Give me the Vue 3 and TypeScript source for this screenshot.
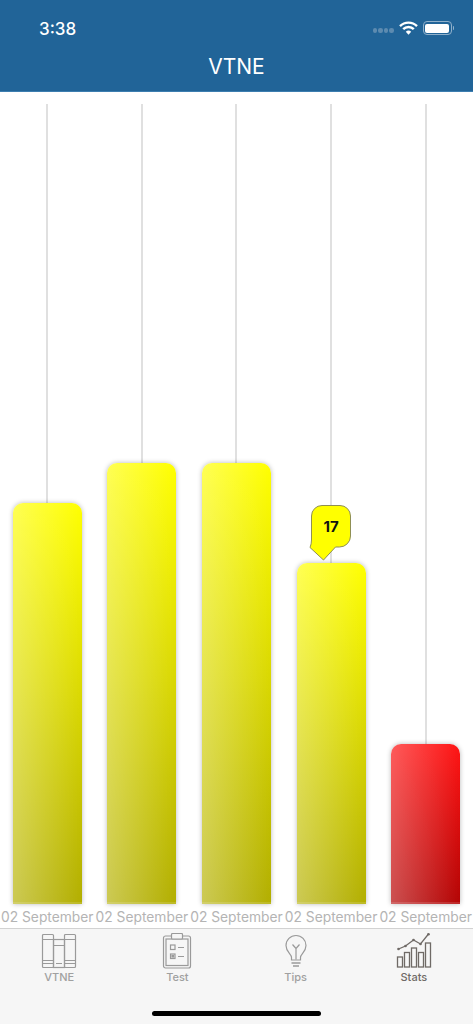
<script setup lang="ts">
interface Bar { height: number; kind: 'yellow' | 'red'; tip?: string }
const bars: Bar[] = [
  { height: 401, kind: 'yellow' },
  { height: 441, kind: 'yellow' },
  { height: 441, kind: 'yellow' },
  { height: 341, kind: 'yellow', tip: '17' },
  { height: 160, kind: 'red' },
]
const active = 'Stats'
const tabs = ['VTNE', 'Test', 'Tips', 'Stats']
</script>

<template>
  <div class="screen">
    <header class="header">
      <div class="status">
        <span class="time">3:38</span>
        <div class="status-icons">
          <span class="dots"><i></i><i></i><i></i><i></i></span>
          <svg class="wifi" width="19" height="14" viewBox="0 0 19 14">
            <path d="M1 5.2 A12 12 0 0 1 18 5.2" fill="none" stroke="#fff" stroke-width="2.4" />
            <path d="M4.2 8.2 A7.5 7.5 0 0 1 14.8 8.2" fill="none" stroke="#fff" stroke-width="2.4" />
            <path d="M6.8 10.8 A3.8 3.8 0 0 1 12.2 10.8 L9.5 13.8 Z" fill="#fff" />
          </svg>
          <span class="battery"><span class="fill"></span></span>
          <span class="nub"></span>
        </div>
      </div>
      <h1 class="title">VTNE</h1>
    </header>

    <main class="chart">
      <div class="cols">
        <div v-for="(b, i) in bars" :key="i" class="col">
          <div class="line"></div>
          <div class="bar" :class="b.kind" :style="{ height: b.height + 'px' }">
            <div v-if="b.tip" class="tip">
              <svg class="tip-shape" width="44" height="58" viewBox="0 0 44 58">
                <path
                  d="M13 1.5 H31 A10.5 10.5 0 0 1 41.5 12 V32 A11 11 0 0 1 30.5 43 H26.5 L14.5 56 L1 43.5 Q2.5 40 2.5 36 V12 A10.5 10.5 0 0 1 13 1.5 Z"
                  fill="#ffff00" stroke="#8f8f55" stroke-width="1"
                />
              </svg>
              <span class="tip-text">{{ b.tip }}</span>
            </div>
          </div>
        </div>
      </div>
      <div class="labels">
        <span v-for="(b, i) in bars" :key="i" class="label">02 September</span>
      </div>
    </main>

    <nav class="tabbar">
      <div class="tabs">
        <div v-for="t in tabs" :key="t" class="tab" :class="{ on: t === active }">
          <svg v-if="t === 'VTNE'" width="36" height="36" viewBox="0 0 36 36" fill="none" stroke="#9a9a9a" stroke-width="1.2">
            <rect x="1.5" y="1.5" width="11" height="33" rx="1" />
            <rect x="12.5" y="6.5" width="11" height="28" />
            <rect x="23.5" y="1.5" width="11" height="33" rx="1" />
            <path d="M1.5 6.5H12.5M12.5 12.5H23.5M23.5 6.5H34.5M1.5 27.5H12.5M1.5 30.5H12.5M15 30.5H21M23.5 27.5H34.5M23.5 30.5H34.5" />
          </svg>
          <svg v-else-if="t === 'Test'" width="36" height="36" viewBox="0 0 36 36" fill="none" stroke="#9a9a9a" stroke-width="1.2">
            <rect x="4.5" y="3" width="27" height="32" rx="2" />
            <rect x="7" y="6" width="22" height="26.5" />
            <rect x="12.5" y="0.5" width="11" height="5.5" rx="1" fill="#f6f6f6" />
            <rect x="11.5" y="12" width="4.5" height="4.5" />
            <rect x="11.5" y="21" width="4.5" height="4.5" />
            <rect x="13" y="22.5" width="1.5" height="1.5" fill="#9a9a9a" />
            <path d="M19 14.5H25M19 23.5H25" />
          </svg>
          <svg v-else-if="t === 'Tips'" width="36" height="36" viewBox="0 0 36 36" fill="none" stroke="#9a9a9a" stroke-width="1.2">
            <path d="M13.5 27 V24.5 C13.5 21 8 19 8 12.5 A10 10 0 0 1 28 12.5 C28 19 22.5 21 22.5 24.5 V27 Z" />
            <path d="M18 26.5V15.5M14.5 11.5L18 15.5L21.5 11.5" />
            <path d="M13.5 30H22.5M15 33H21" stroke-width="1.6" />
          </svg>
          <svg v-else width="36" height="36" viewBox="0 0 36 36" fill="none" stroke="#6f6a66" stroke-width="1.3">
            <rect x="1.5" y="24" width="5" height="10" />
            <rect x="8.5" y="19.5" width="5" height="14.5" />
            <rect x="15.5" y="15" width="5" height="19" />
            <rect x="22.5" y="19.5" width="5" height="14.5" />
            <rect x="29.5" y="10" width="5" height="24" />
            <path d="M2.5 16L9.5 13L17.5 7L24.5 11L32.5 1" />
            <g fill="#6f6a66" stroke="none">
              <circle cx="2.5" cy="16" r="1.3" />
              <circle cx="9.5" cy="13" r="1.3" />
              <circle cx="17.5" cy="7" r="1.3" />
              <circle cx="24.5" cy="11" r="1.3" />
              <circle cx="32.5" cy="1.3" r="1.3" />
            </g>
          </svg>
          <span class="tab-label">{{ t }}</span>
        </div>
      </div>
      <div class="home"></div>
    </nav>
  </div>
</template>

<style>
html, body { margin: 0; padding: 0; background: #fff; }
</style>

<style scoped>
.screen {
  width: 473px;
  height: 1024px;
  display: flex;
  flex-direction: column;
  overflow: hidden;
  font-family: Inter, "Liberation Sans", sans-serif;
  background: #fff;
}
.header {
  height: 92px;
  box-sizing: border-box;
  background: #216498;
  border-bottom: 1px solid #3d7eb0;
  color: #fff;
  display: flex;
  flex-direction: column;
}
.status {
  height: 53px;
  padding: 18px 19px 0 39px;
  box-sizing: border-box;
  display: flex;
  justify-content: space-between;
  align-items: flex-start;
}
.time { font-size: 17px; font-weight: 500; line-height: 22px; }
.status-icons { display: flex; align-items: center; height: 22px; margin-top: -1px; }
.dots { display: flex; gap: 1px; margin-right: 5px; margin-top: 5px; }
.dots i { width: 4.5px; height: 4.5px; border-radius: 50%; background: #5d8bb0; display: block; }
.wifi { margin-right: 5px; }
.battery {
  width: 29px;
  height: 14px;
  border: 1px solid #8fb0cb;
  border-radius: 4px;
  padding: 1.5px;
  box-sizing: border-box;
  display: flex;
}
.fill { flex: 1; background: #fff; border-radius: 2px; }
.nub { width: 1.5px; height: 4px; background: #8fb0cb; margin-left: 1px; border-radius: 0 1px 1px 0; }
.title {
  margin: 0;
  text-align: center;
  font-size: 21px;
  font-weight: 400;
  line-height: 28px;
}
.chart { flex: 1; display: flex; flex-direction: column; padding-top: 12px; min-height: 0; }
.cols { height: 800px; display: flex; }
.col { flex: 1; display: flex; flex-direction: column; align-items: center; }
.line { flex: 1; width: 2px; background: #e0e0e0; }
.bar {
  width: 69px;
  border-radius: 10px 10px 0 0;
  position: relative;
  box-shadow: 0 0 5px rgba(0, 0, 0, 0.28), inset 0 -2px 0 rgba(255, 255, 255, 0.14);
}
.yellow {
  background:
    linear-gradient(to right, rgba(255, 255, 255, 0.33), rgba(255, 255, 255, 0)),
    linear-gradient(to bottom, #ffff00, #b2ae00);
}
.red {
  background:
    linear-gradient(to right, rgba(255, 255, 255, 0.3), rgba(255, 255, 255, 0)),
    linear-gradient(to bottom, #ff1414, #b30404);
}
.tip {
  position: absolute;
  left: 12.5px;
  top: -59px;
  width: 44px;
  height: 58px;
  display: flex;
  justify-content: center;
}
.tip-shape { position: absolute; inset: 0; }
.tip-text {
  position: relative;
  font-size: 15px;
  font-weight: 700;
  line-height: 46px;
  color: #111;
}
.labels { display: flex; height: 24px; box-sizing: border-box; align-items: flex-start; padding-top: 1px; }
.label {
  flex: 1;
  min-width: 0;
  text-align: center;
  font-size: 13.8px;
  color: #b4b4b4;
  white-space: nowrap;
  line-height: 24px;
}
.tabbar {
  height: 96px;
  box-sizing: border-box;
  background: #f6f6f6;
  border-top: 1px solid #d2d2d2;
  display: flex;
  flex-direction: column;
  align-items: center;
}
.tabs { width: 473px; padding: 4px 0 0; display: flex; box-sizing: border-box; }
.tab { flex: 1; display: flex; flex-direction: column; align-items: center; gap: 2px; }
.tab-label { font-size: 11px; font-weight: 500; line-height: 13px; color: #a0a0a0; }
.tab.on .tab-label { color: #6f6a66; }
.home { width: 169px; height: 5px; border-radius: 3px; background: #000; margin-top: 27px; }
</style>
